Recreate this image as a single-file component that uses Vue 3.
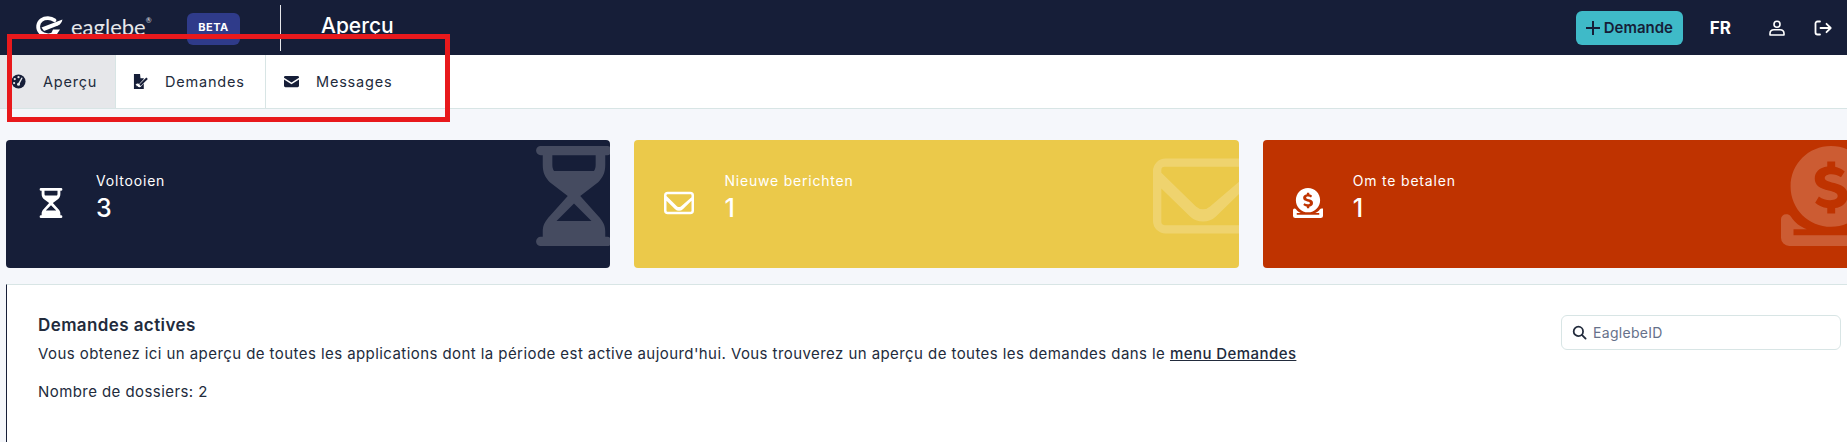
<script setup>
const tabs = [
  { label: 'Aperçu', icon: 'gauge', active: true },
  { label: 'Demandes', icon: 'edit' },
  { label: 'Messages', icon: 'mail' },
]

const cards = [
  { label: 'Voltooien', value: 3, icon: 'hourglass', color: 'navy' },
  { label: 'Nieuwe berichten', value: 1, icon: 'envelope', color: 'yellow' },
  { label: 'Om te betalen', value: 1, icon: 'coin', color: 'red' },
]
</script>

<template>
  <div class="page">
    <header class="topbar">
      <div class="brand">
        <svg class="logo" viewBox="0 0 28 22">
          <path d="M19.500 4.200C16 1.600 10 1.500 6.500 4 2.500 6.800 2 13 5.500 16.500c3.500 3.300 9.500 3.500 13.500 1.500" fill="none" stroke="#fff" stroke-width="3.800" stroke-linecap="round" />
          <path d="M6.500 11.500 27.500 3.500c-.500 2.500-2 4.800-4.500 6L9 15z" fill="#fff" />
          <path d="M18 13.500h7l-3 4.500h-6z" fill="#fff" />
        </svg>
        <span class="wordmark">eaglebe<sup>®</sup></span>
      </div>
      <span class="beta">BETA</span>
      <span class="divider"></span>
      <h1 class="title">Aperçu</h1>
      <div class="actions">
        <button class="add">
          <svg class="plus" viewBox="0 0 14 14" stroke="#161e38" stroke-width="2">
            <path d="M7 0v14M0 7h14" />
          </svg>
          Demande
        </button>
        <span class="lang">FR</span>
        <svg class="user" viewBox="0 0 16 16" fill="none" stroke="#fff" stroke-width="1.600">
          <circle cx="8" cy="4.200" r="3" />
          <path d="M1 15v-1.500C1 11 3 9.800 5 9.800h6c2 0 4 1.200 4 3.700V15z" stroke-linejoin="round" />
        </svg>
        <svg class="exit" viewBox="0 0 18 16" fill="none" stroke="#fff" stroke-width="1.800" stroke-linecap="round" stroke-linejoin="round">
          <path d="M6 1.500H3.500A2 2 0 0 0 1.500 3.500v9a2 2 0 0 0 2 2H6" />
          <path d="M6.500 8h10M12.500 3.800 16.700 8l-4.200 4.200" />
        </svg>
      </div>
    </header>

    <nav class="tabs">
      <a v-for="tab in tabs" :key="tab.label" class="tab" :class="{ active: tab.active }">
        <svg v-if="tab.icon === 'gauge'" class="tab-icon" viewBox="0 0 16 16">
          <circle cx="8" cy="8" r="7.500" fill="#161e38" />
          <circle cx="8" cy="3.400" r="1.200" fill="#e6e7ea" />
          <circle cx="4" cy="5.400" r="1.200" fill="#e6e7ea" />
          <circle cx="3.300" cy="9.600" r="1.200" fill="#e6e7ea" />
          <path d="M8 11 11.500 4.500" stroke="#e6e7ea" stroke-width="1.500" stroke-linecap="round" />
          <circle cx="8" cy="11" r="1.600" fill="#e6e7ea" />
        </svg>
        <svg v-else-if="tab.icon === 'edit'" class="tab-icon" viewBox="0 0 16 16">
          <path fill="#161e38" d="M1 0h6.500l.5 4.500h3.500V16H1z" />
          <path d="M4 12.500c1.500-2 2 .5 3 0l8-8.500" fill="none" stroke="#fff" stroke-width="3.200" />
          <path d="M4 12.500c1.500-2 2 .5 3 0" fill="none" stroke="#fff" stroke-width="1" />
          <path d="M7.500 12 15 4.500" fill="none" stroke="#161e38" stroke-width="2.200" />
        </svg>
        <svg v-else class="tab-icon" viewBox="0 0 16 16">
          <path fill="#161e38" d="M1.500 2h13A1.500 1.500 0 0 1 16 3.500V4L8 9 0 4v-.5A1.500 1.500 0 0 1 1.500 2zM0 5.800l8 5 8-5V12.500A1.500 1.500 0 0 1 14.500 14h-13A1.500 1.500 0 0 1 0 12.500z" />
        </svg>
        <span>{{ tab.label }}</span>
      </a>
    </nav>

    <section class="cards">
      <article v-for="card in cards" :key="card.label" class="card" :class="card.color">
        <svg v-for="kind in ['icon', 'ghost']" :key="kind" :class="kind" viewBox="0 0 24 24" fill="#fff">
          <path v-if="card.icon === 'hourglass'" fill-rule="evenodd" d="M4 0h16a1.100 1.100 0 0 1 0 2.200h-.5v2.300c0 2-.600 3-1.700 4.200L13.500 12l4.300 4.800c1.100 1.200 1.700 2.200 1.700 3.700v1.300h.5a1.100 1.100 0 0 1 0 2.200H4a1.100 1.100 0 0 1 0-2.200h.5v-1.300c0-1.500.600-2.500 1.700-3.700l4.300-4.800L6.200 8.700C5.100 7.500 4.500 6.500 4.500 4.500V2.200H4A1.100 1.100 0 0 1 4 0zM6.800 2.200v2.300c0 .600.100 1 .400 1.500h9.600c.3-.500.400-.900.400-1.500V2.200zM12 13.800 7.800 18h8.400z" />
          <path v-else-if="card.icon === 'envelope'" fill-rule="evenodd" d="M3 3h18a3 3 0 0 1 3 3v12a3 3 0 0 1-3 3H3a3 3 0 0 1-3-3V6a3 3 0 0 1 3-3zm-.200 2a.8.800 0 0 0-.800.800v.600l8.300 8.100a2.500 2.500 0 0 0 3.400 0L22 7.400v-1.600a.8.800 0 0 0-.800-.800zM22 10.200l-6.900 6.700a4.500 4.500 0 0 1-6.200 0L2 10.200v8a.8.800 0 0 0 .800.800h18.400a.8.800 0 0 0 .800-.800z" />
          <template v-else>
            <path fill-rule="evenodd" d="M12 0c5.400 0 9.700 4.300 9.700 9.700s-4.300 9.700-9.700 9.700-9.700-4.300-9.700-9.700S6.600 0 12 0zm-.900 3.700v1.200c-1.900.300-3 1.300-3 2.900 0 1.700 1.300 2.400 3.300 2.900 1.700.400 2.200.700 2.200 1.300 0 .600-.700 1-1.800 1-1 0-1.900-.300-2.700-.900l-.900 1.500c.800.700 1.800 1.100 2.900 1.300v1.300h1.900v-1.300c1.900-.300 3-1.400 3-3 0-1.700-1.100-2.500-3.200-3-1.700-.400-2.300-.700-2.300-1.200s.600-.900 1.600-.900c.800 0 1.600.300 2.300.700l.900-1.400c-.700-.500-1.500-.900-2.300-1.100V3.700z" />
            <path d="M1.200 16.400c.500 0 .900.100 1.200.600 1 1.500 2.200 2.400 3.800 3H3v1.400h18V20h-3.200c1.600-.600 2.800-1.500 3.800-3 .300-.500.700-.600 1.200-.600H24V22a2 2 0 0 1-2 2H2a2 2 0 0 1-2-2v-4.400a1.200 1.200 0 0 1 1.200-1.200z" />
          </template>
        </svg>
        <div class="card-text">
          <span class="card-label">{{ card.label }}</span>
          <strong class="card-value">{{ card.value }}</strong>
        </div>
      </article>
    </section>

    <main class="panel">
      <div class="panel-head">
        <div>
          <h2>Demandes actives</h2>
          <p>Vous obtenez ici un aperçu de toutes les applications dont la période est active aujourd'hui. Vous trouverez un aperçu de toutes les demandes dans le <a class="link">menu Demandes</a></p>
          <p class="count">Nombre de dossiers: 2</p>
        </div>
        <label class="search">
          <svg viewBox="0 0 16 16" fill="none" stroke="#222b3c" stroke-width="1.900" stroke-linecap="round">
            <circle cx="6.800" cy="6.800" r="5" />
            <path d="m10.500 10.500 4 4" />
          </svg>
          <input placeholder="EaglebeID" />
        </label>
      </div>
    </main>

    <div class="highlight"></div>
  </div>
</template>

<style scoped>
.page {
  position: relative;
  width: 1847px;
  height: 442px;
  overflow: hidden;
  background: #f5f7fb;
  font-family: Inter, "Liberation Sans", sans-serif;
  color: #222b3c;
}

.topbar {
  display: flex;
  align-items: center;
  height: 55px;
  padding-left: 35px;
  background: #161e38;
  color: #fff;
}

.brand {
  display: flex;
  align-items: center;
  gap: 8px;
  width: 152px;
  margin-bottom: 2px;
}

.logo {
  width: 28px;
  height: 22px;
}

.wordmark {
  font-family: Lato, sans-serif;
  font-size: 22px;
  font-weight: 400;
  color: #e6e7ea;
}

.wordmark sup {
  font-size: 7px;
  vertical-align: 12px;
  line-height: 0;
}

.beta {
  width: 53px;
  padding: 7px 0 11px;
  margin-top: 2px;
  border-radius: 6px;
  background: #2f3b8a;
  font-size: 11px;
  font-weight: 700;
  letter-spacing: .5px;
  text-align: center;
}

.divider {
  width: 1px;
  height: 46px;
  margin: 0 40px;
  background: #e6e7ea;
}

.title {
  margin: 0 0 5px;
  font-size: 21px;
  font-weight: 500;
}

.actions {
  display: flex;
  align-items: center;
  margin-left: auto;
  padding-right: 15px;
}

.add {
  display: flex;
  align-items: center;
  justify-content: center;
  gap: 4px;
  width: 107px;
  height: 34px;
  margin-right: 1px;
  border: 0;
  border-radius: 6px;
  background: #3fbac8;
  color: #161e38;
  font: 600 15px Inter, sans-serif;
}

.plus {
  width: 14px;
  height: 14px;
}

.lang {
  margin: 0 38px 0 26px;
  font-size: 17px;
  font-weight: 700;
}

.user {
  width: 16px;
  height: 18px;
  margin-right: 29px;
}

.exit {
  width: 18px;
  height: 16px;
}

.tabs {
  display: flex;
  height: 53px;
  border-bottom: 1px solid #d8e5e5;
  background: #fff;
}

.tab {
  display: flex;
  align-items: center;
  gap: 17px;
  box-sizing: border-box;
  width: 150px;
  padding-left: 17px;
  border-right: 1px solid #d8e5e5;
  font-size: 14.500px;
  font-weight: 400;
  letter-spacing: .8px;
  color: #222b3c;
}

.tab:first-child {
  width: 116px;
  padding-left: 11px;
}

.tab:last-child {
  border-right: 0;
  padding-left: 18px;
}

.tab.active {
  background: #e6e7ea;
}

.tab-icon {
  width: 15px;
  height: 15px;
  flex: none;
}

.cards {
  display: flex;
  gap: 24px;
  padding: 31px 0 0 6px;
  margin-right: -100px;
}

.card {
  position: relative;
  display: flex;
  align-items: center;
  flex: none;
  width: 604.400px;
  height: 128px;
  overflow: hidden;
  border-radius: 4px;
  box-sizing: border-box;
  padding-left: 30px;
  color: #fff;
}

.navy {
  background: #161e38;
}

.yellow {
  background: #ebc94a;
}

.red {
  background: #bf3300;
}

.icon {
  width: 30px;
  height: 30px;
  flex: none;
  margin-bottom: 2px;
}

.ghost {
  position: absolute;
  top: 6px;
  right: -14px;
  width: 100px;
  height: 100px;
  opacity: .2;
}

.card-text {
  display: flex;
  flex-direction: column;
  gap: 4px;
  margin: 0 0 14px 30px;
}

.card-label {
  font-size: 14px;
  letter-spacing: .8px;
}

.card-value {
  font-size: 25px;
  font-weight: 500;
  line-height: 30px;
}

.panel {
  height: 160px;
  margin: 16px 0 0 6px;
  border-top: 1px solid #d8e5e5;
  border-left: 1px solid #161e38;
  background: #fff;
  padding: 30px 6px 0 31px;
}

.panel-head {
  display: flex;
  justify-content: space-between;
  align-items: flex-start;
}

h2 {
  margin: 0 0 8px;
  font-size: 17px;
  font-weight: 600;
  line-height: 20px;
  letter-spacing: .4px;
}

p {
  margin: 0;
  font-size: 15px;
  line-height: 21px;
  letter-spacing: .43px;
}

.count {
  margin-top: 17px;
}

.link {
  font-weight: 500;
  text-decoration: underline;
}

.search {
  display: flex;
  align-items: center;
  gap: 6px;
  width: 280px;
  height: 35px;
  box-sizing: border-box;
  padding-left: 10px;
  border: 1px solid #d8e5e5;
  border-radius: 6px;
}

.search svg {
  width: 15px;
  height: 15px;
  flex: none;
}

.search input {
  min-width: 0;
  padding: 0;
  border: 0;
  outline: 0;
  font: 14px Inter, sans-serif;
  letter-spacing: .3px;
}

.search input::placeholder {
  color: #66718a;
}

.highlight {
  position: absolute;
  top: 34px;
  left: 7px;
  width: 443px;
  height: 88px;
  box-sizing: border-box;
  border: 5px solid #e8191c;
}
</style>
